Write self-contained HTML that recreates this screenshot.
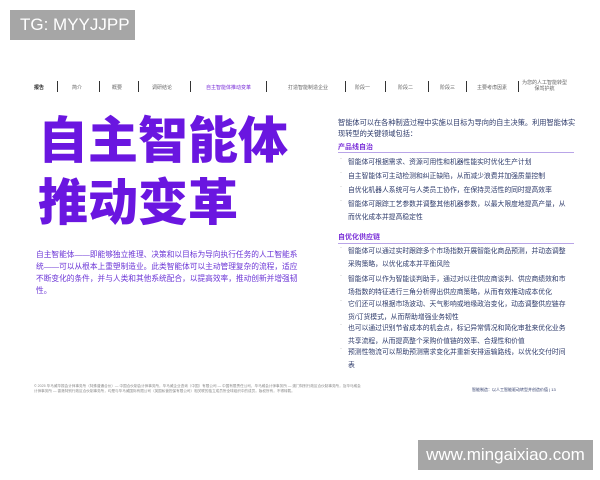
<!DOCTYPE html>
<html><head><meta charset="utf-8"><style>
*{margin:0;padding:0;box-sizing:border-box}
body{width:600px;height:480px;background:#fff;position:relative;overflow:hidden;font-family:"Liberation Sans","Noto Sans CJK SC",sans-serif}
.abs{position:absolute;white-space:nowrap}
.nav{font-size:5px;color:#666;top:84px}
.sep{position:absolute;top:81px;width:1px;height:11px;background:#333}
.title{left:38px;font-size:50px;font-weight:900;color:#6a16e0;letter-spacing:0;line-height:50px}
.lp{left:36px;top:249px;width:264px;font-size:7.7px;line-height:12px;color:#6b35d6}
.rc{left:338px;width:242px;font-size:7.2px;color:#2d3a6a;line-height:11px}
.h{font-weight:bold;color:#7a2fd8;font-size:7px}
.ln{position:absolute;height:1px;background:#b9a5e8}
.b{position:absolute;left:348px;width:222px;font-size:6.8px;line-height:13px;color:#2d3a6a;white-space:normal}
.d{position:absolute;left:340px;font-size:6px;color:#888}
</style></head><body>
<div class="abs" style="left:10px;top:10px;width:125px;height:30px;background:#a6a6a6;color:#fff;font-size:17px;line-height:30px;padding-left:10px">TG: MYYJJPP</div>

<div class="abs nav" style="left:34px;color:#222;font-weight:bold">报告</div>
<div class="sep" style="left:57px"></div>
<div class="abs nav" style="left:72px">简介</div>
<div class="sep" style="left:99px"></div>
<div class="abs nav" style="left:112px">概要</div>
<div class="sep" style="left:138px"></div>
<div class="abs nav" style="left:152px">调研结论</div>
<div class="sep" style="left:190px"></div>
<div class="abs nav" style="left:206px;color:#7a2fd8">自主智能体推动变革</div>
<div class="sep" style="left:266px"></div>
<div class="abs nav" style="left:288px">打造智能制造企业</div>
<div class="sep" style="left:345px"></div>
<div class="abs nav" style="left:355px">阶段一</div>
<div class="sep" style="left:385px"></div>
<div class="abs nav" style="left:398px">阶段二</div>
<div class="sep" style="left:428px"></div>
<div class="abs nav" style="left:440px">阶段三</div>
<div class="sep" style="left:466px"></div>
<div class="abs nav" style="left:477px">主要考虑因素</div>
<div class="sep" style="left:518px"></div>
<div class="abs nav" style="left:522px;top:80px;text-align:center;line-height:6px">为您的人工智能转型<br>保驾护航</div>

<div class="abs title" style="top:116px">自主智能体</div>
<div class="abs title" style="top:178px">推动变革</div>

<div class="abs lp" style="white-space:normal">自主智能体——即能够独立推理、决策和以目标为导向执行任务的人工智能系统——可以从根本上重塑制造业。此类智能体可以主动管理复杂的流程，适应不断变化的条件，并与人类和其他系统配合，以提高效率，推动创新并增强韧性。</div>

<div class="abs rc" style="top:117px;white-space:normal">智能体可以在各种制造过程中实施以目标为导向的自主决策。利用智能体实现转型的关键领域包括：</div>
<div class="abs h" style="left:338px;top:142px">产品线自治</div>
<div class="ln" style="left:338px;top:152px;width:236px"></div>
<div class="d" style="top:156px">·</div><div class="b" style="top:156px">智能体可根据需求、资源可用性和机器性能实时优化生产计划</div>
<div class="d" style="top:170px">·</div><div class="b" style="top:170px">自主智能体可主动检测和纠正缺陷，从而减少浪费并加强质量控制</div>
<div class="d" style="top:184px">·</div><div class="b" style="top:184px">自优化机器人系统可与人类员工协作，在保持灵活性的同时提高效率</div>
<div class="d" style="top:198px">·</div><div class="b" style="top:198px">智能体可跟踪工艺参数并调整其他机器参数，以最大限度地提高产量，从而优化成本并提高稳定性</div>
<div class="abs h" style="left:338px;top:232px">自优化供应链</div>
<div class="ln" style="left:338px;top:243px;width:236px"></div>
<div class="d" style="top:245px">·</div><div class="b" style="top:245px">智能体可以通过实时跟踪多个市场指数开展智能化商品预测，并动态调整采购策略，以优化成本并平衡风险</div>
<div class="d" style="top:273px">·</div><div class="b" style="top:273px">智能体可以作为智能谈判助手，通过对以往供应商谈判、供应商绩效和市场指数的特征进行三角分析得出供应商策略，从而有效推动成本优化</div>
<div class="d" style="top:298px">·</div><div class="b" style="top:298px">它们还可以根据市场波动、天气影响或地缘政治变化，动态调整供应链存货/订货模式，从而帮助增强业务韧性</div>
<div class="d" style="top:322px">·</div><div class="b" style="top:322px">也可以通过识别节省成本的机会点，标记异常情况和简化审批来优化业务共享流程，从而提高整个采购价值链的效率、合规性和价值</div>
<div class="d" style="top:346px">·</div><div class="b" style="top:346px">预测性物流可以帮助预测需求变化并重新安排运输路线，以优化交付时间表</div>

<div class="abs" style="left:34px;top:384px;width:330px;font-size:3.6px;line-height:4.8px;color:#888;white-space:normal">© 2025 毕马威华振会计师事务所（特殊普通合伙）— 中国合伙制会计师事务所，毕马威企业咨询（中国）有限公司 — 中国有限责任公司，毕马威会计师事务所 — 澳门特别行政区合伙制事务所，及毕马威会计师事务所 — 香港特别行政区合伙制事务所，均是与毕马威国际有限公司（英国私营担保有限公司）相关联的独立成员所全球组织中的成员。版权所有，不得转载。</div>
<div class="abs" style="left:472px;top:387px;font-size:4px;color:#2d3a6a">智能制造：以人工智能驱动转型并创造价值 | 13</div>

<div class="abs" style="left:418px;top:440px;width:175px;height:30px;background:#a6a6a6;color:#fff;font-size:17px;line-height:30px;text-align:center">www.mingaixiao.com</div>
</body></html>
